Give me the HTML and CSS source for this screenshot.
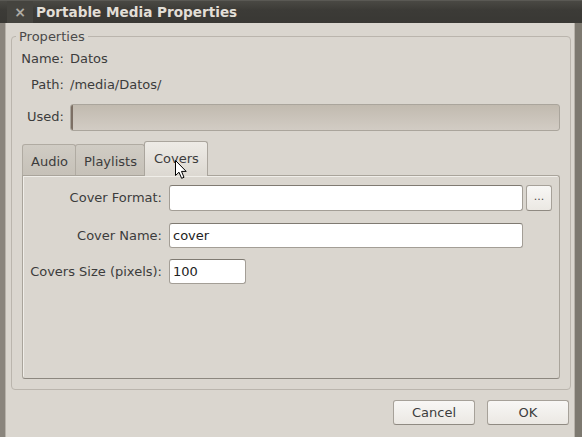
FILE: index.html
```html
<!DOCTYPE html>
<html>
<head>
<meta charset="utf-8">
<link rel="stylesheet" href="styles.css">
</head>
<body>
<div class="window">
  <div class="titlebar">
    <span class="close">×</span>
    <span class="title">Portable Media Properties</span>
  </div>
  <div class="client">
    <fieldset class="frame">
      <legend>Properties</legend>
      <div class="info">
        <span class="lbl">Name:</span><span class="val">Datos</span>
        <span class="lbl">Path:</span><span class="val">/media/Datos/</span>
        <span class="lbl used-lbl">Used:</span><div class="bar"><div class="fill" style="width:2px"></div></div>
      </div>
      <div class="notebook">
        <div class="tabs">
          <div class="tab">Audio</div>
          <div class="tab">Playlists</div>
          <div class="tab active">Covers
            <svg class="cursor" width="13" height="20" viewBox="0 0 13 20"><path d="M0.5 0.5 L0.5 15.5 L4 12.2 L6.6 18.3 L9 17.3 L6.5 11.4 L11.2 11.4 Z" fill="#fff" stroke="#000" stroke-width="1" stroke-linejoin="round"/></svg>
          </div>
        </div>
        <div class="panel">
          <div class="form">
            <label class="flbl">Cover Format:</label>
            <div class="fcell"><div class="entry grow"></div><button class="dots">...</button></div>
            <label class="flbl">Cover Name:</label>
            <div class="fcell"><div class="entry name">cover</div></div>
            <label class="flbl">Covers Size (pixels):</label>
            <div class="fcell"><div class="entry size">100</div></div>
          </div>
        </div>
      </div>
    </fieldset>
    <div class="actions">
      <button class="btn">Cancel</button>
      <button class="btn">OK</button>
    </div>
  </div>
</div>
</body>
</html>
```
FILE: styles.css
```css
* { box-sizing: border-box; }
html, body { margin: 0; padding: 0; }
body {
  width: 582px; height: 437px; overflow: hidden;
  background: #dad6cf;
  font-family: "DejaVu Sans", sans-serif;
  font-size: 13px;
  color: #3c3c3c;
}
.window {
  width: 582px; height: 437px;
  display: flex; flex-direction: column;
  border-left: 5px solid #8a857d;
  border-right: 7px solid #7d7970;
  box-shadow: inset 1px 0 0 #b7b2aa, inset -1px 0 0 #b7b2aa;
  background: #dad6cf;
}
.titlebar {
  height: 23px;
  flex: none;
  display: flex; align-items: center;
  background: linear-gradient(#4a4944, #3c3b37 40%, #393834);
  border-top: 1px solid #5a5954;
  margin-left: -5px; margin-right: -7px;
  padding-left: 7px;
}
.close {
  width: 26px; height: 22px;
  display: flex; align-items: center; justify-content: center;
  color: #aeaba4; font-size: 14px; font-weight: bold;
  background: #45443f;
}
.title {
  margin-left: 3px;
  font-weight: bold; font-size: 13.6px;
  color: #e2ded6;
}
.client { flex: 1; display: flex; flex-direction: column; }
.frame {
  margin: 6px 4px 0 6px;
  padding: 0 10px 10px 0;
  border: 1px solid #bab5ad;
  border-radius: 4px;
  min-width: 0;
}
.frame legend {
  margin-left: 4px;
  padding: 0 3px;
  line-height: 15px;
  color: #4a4a4a;
}
.info {
  display: grid;
  grid-template-columns: 52px 1fr;
  grid-template-rows: 26px 26px 34px;
  column-gap: 6px;
  padding-top: 1px;
  align-items: center;
}
.lbl { text-align: right; }
.info .bar {
  grid-row: 3; align-self: start;
  margin-top: 7px;
  height: 27px;
  border: 1px solid #aaa59c;
  border-radius: 3px;
  background: linear-gradient(#c1baaf, #d2ccc4);
  overflow: hidden;
}
.info .used-lbl { grid-row: 3; align-self: start; margin-top: 12px; }
.fill { height: 100%; background: #7c6f64; }
.notebook { margin: 9px 0 0 10px; }
.tabs { display: flex; align-items: flex-end; height: 35px; position: relative; z-index: 1; }
.tab {
  height: 31px;
  padding: 2px 7px 0 8px;
  display: flex; align-items: center;
  background: linear-gradient(#d0ccc4, #c6c1b8);
  border: 1px solid #b0aba2;
  border-bottom: none;
  border-radius: 3px 3px 0 0;
}
.tab + .tab { margin-left: -1px; }
.tab.active {
  padding: 0 8px 2px 9px;
  background: linear-gradient(#eeebe6, #dcd8d1);
  border-color: #aaa59d;
  position: relative;
  margin-bottom: -1px;
  height: 35px;
}
.cursor { position: absolute; left: 30px; top: 18px; }
.panel {
  height: 204px;
  border: 1px solid #a9a49b;
  border-bottom-color: #8c877f;
  border-radius: 0 3px 3px 3px;
  box-shadow: inset 1px 1px 0 #f0eee9;
  background: #dad6cf;
  padding: 8px 7px 0 0;
}
.form {
  display: grid;
  grid-template-columns: 139px 1fr;
  grid-template-rows: 27px 25px 25px;
  column-gap: 7px;
  row-gap: 11.5px;
  align-items: center;
}
.flbl { text-align: right; }
.fcell { display: flex; gap: 3px; align-items: center; }
.entry {
  height: 25px;
  background: #fff;
  border: 1px solid #a39e96;
  border-top-color: #7f7a72;
  border-radius: 3px;
  padding: 0 3px;
  display: flex; align-items: center;
  color: #222;
}
.entry.grow { flex: 1; height: 26px; }
.entry.name { width: 354px; }
.entry.size { width: 77px; }
.dots, .btn {
  font-family: "DejaVu Sans", sans-serif;
  font-size: 13px;
  color: #3c3c3c;
  background: linear-gradient(#f8f7f5, #ebe8e3);
  border: 1px solid #a6a199;
  border-bottom-color: #8f8a82;
  border-radius: 3px;
  padding: 0;
}
.dots { width: 26px; height: 26px; color: #4a4a4a; font-size: 11px; padding-bottom: 2px; }
.actions {
  display: flex; justify-content: flex-end; gap: 12px;
  margin: 10px 6px 0 0;
}
.btn { width: 82px; height: 25px; }
```
